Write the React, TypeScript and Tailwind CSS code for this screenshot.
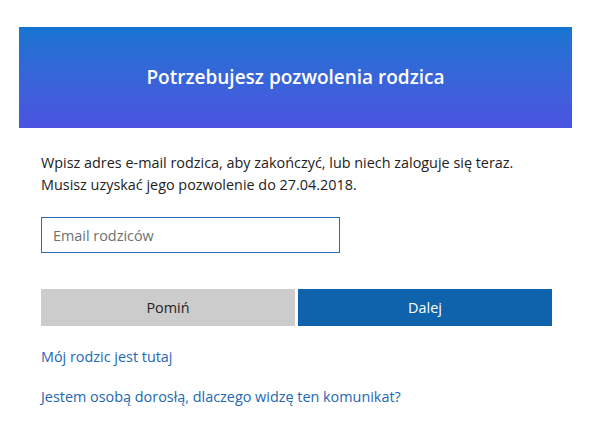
import { useState } from 'react';

export default function App() {
  const [email, setEmail] = useState('');

  return (
    <div className="min-h-screen bg-white" style={{ fontFamily: '"Open Sans", "Noto Sans", sans-serif' }}>
      <div className="ml-[19px] w-[553px] pt-[27px]">
        <div className="flex h-[101px] items-center justify-center bg-gradient-to-b from-[#1474d1] to-[#4a53e1]">
          <h1 className="text-[19px] font-semibold text-white">Potrzebujesz pozwolenia rodzica</h1>
        </div>

        <div className="pl-[22px] pr-[20px] pt-[24px]">
          <p className="text-[14.4px] leading-[22px] text-[#222222]">
            Wpisz adres e-mail rodzica, aby zakończyć, lub niech zaloguje się teraz.
            <br />
            Musisz uzyskać jego pozwolenie do 27.04.2018.
          </p>

          <input
            className="mt-[21px] block h-[36px] w-[299px] border border-[#2b6cb8] px-[11px] text-[14.4px] text-[#262626] outline-none placeholder:text-[#6f6f6f]"
            placeholder="Email rodziców"
            value={email}
            onChange={e => setEmail(e.target.value)}
          />

          <div className="mt-[36px] flex gap-[3px]">
            <button className="h-[37px] flex-1 bg-[#cccccc] text-[14.4px] text-[#222222]">Pomiń</button>
            <button className="h-[37px] flex-1 bg-[#0f63ad] text-[14.4px] text-white">Dalej</button>
          </div>

          <div className="mt-[20px] flex flex-col gap-[18px] text-[14.4px] leading-[22px] text-[#1e67b3]">
            <a href="#">Mój rodzic jest tutaj</a>
            <a href="#">Jestem osobą dorosłą, dlaczego widzę ten komunikat?</a>
          </div>
        </div>
      </div>
    </div>
  );
}
